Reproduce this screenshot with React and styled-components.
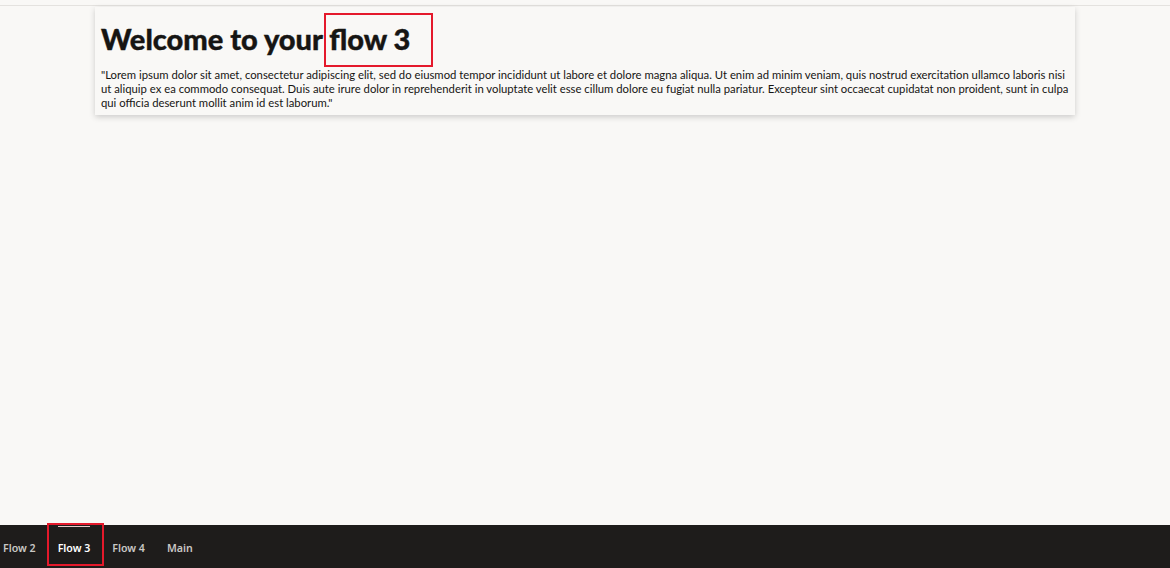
import React from 'react';
import styled, { createGlobalStyle } from 'styled-components';

const GlobalStyle = createGlobalStyle`
	html, body {
		margin: 0;
		padding: 0;
		background: #f9f8f6;
		font-family: Lato, 'Noto Sans', sans-serif;
		color: #161513;
	}
`;

const Page = styled.div`
	display: flex;
	flex-direction: column;
	height: 568px;
	overflow: hidden;
`;

const TopStrip = styled.div`
	height: 5px;
	border-bottom: 1px solid #e4e2df;
	flex: none;
`;

const Main = styled.main`
	flex: 1;
	padding-top: 1px;
`;

const Card = styled.section`
	width: 980px;
	margin: 0 auto;
	box-sizing: border-box;
	padding: 12px 6px 5px 6px;
	background: #f9f8f6;
	box-shadow: 0 2px 6px rgba(0, 0, 0, 0.18);
`;

const Title = styled.h1`
	margin: 0 0 9px 0;
	font-size: 29px;
	line-height: 40px;
	font-weight: 900;
	-webkit-text-stroke: 0.4px #161513;
`;

const Highlight = styled.span`
	position: relative;

	&::after {
		content: '';
		position: absolute;
		left: -5px;
		right: -23px;
		top: -8px;
		bottom: -11px;
		border: 2px solid #e4192b;
	}
`;

const Body = styled.p`
	margin: 0;
	font-size: 11.3px;
	line-height: 14px;
`;

const Footer = styled.nav`
	flex: none;
	height: 43px;
	background: #1e1c1b;
	display: flex;
	align-items: stretch;
	padding-left: 3px;
`;

const Tab = styled.div`
	position: relative;
	display: flex;
	align-items: center;
	padding: 2px 11px 0 11px;
	font-family: 'Noto Sans', sans-serif;
	font-size: 10.6px;
	font-weight: 600;
	color: ${(p) => (p.selected ? '#ffffff' : '#c9c7c4')};

	&:first-child {
		padding-left: 0;
	}

	${(p) =>
		p.selected &&
		`
		&::before {
			content: '';
			position: absolute;
			top: 1px;
			left: 11px;
			right: 11px;
			height: 1px;
			background: #e8c9c9;
		}
		&::after {
			content: '';
			position: absolute;
			left: 0;
			right: -3px;
			top: -2px;
			bottom: 2px;
			border: 2px solid #e4192b;
		}
	`}
`;

const lorem =
	'"Lorem ipsum dolor sit amet, consectetur adipiscing elit, sed do eiusmod tempor incididunt ut labore et dolore magna aliqua. Ut enim ad minim veniam, quis nostrud exercitation ullamco laboris nisi ut aliquip ex ea commodo consequat. Duis aute irure dolor in reprehenderit in voluptate velit esse cillum dolore eu fugiat nulla pariatur. Excepteur sint occaecat cupidatat non proident, sunt in culpa qui officia deserunt mollit anim id est laborum."';

const tabs = ['Flow 2', 'Flow 3', 'Flow 4', 'Main'];

export default function App() {
	return (
		<>
			<GlobalStyle />
			<Page>
				<TopStrip />
				<Main>
					<Card>
						<Title>
							Welcome to your <Highlight>flow 3</Highlight>
						</Title>
						<Body>{lorem}</Body>
					</Card>
				</Main>
				<Footer>
					{tabs.map((t) => (
						<Tab key={t} selected={t === 'Flow 3'}>
							{t}
						</Tab>
					))}
				</Footer>
			</Page>
		</>
	);
}
